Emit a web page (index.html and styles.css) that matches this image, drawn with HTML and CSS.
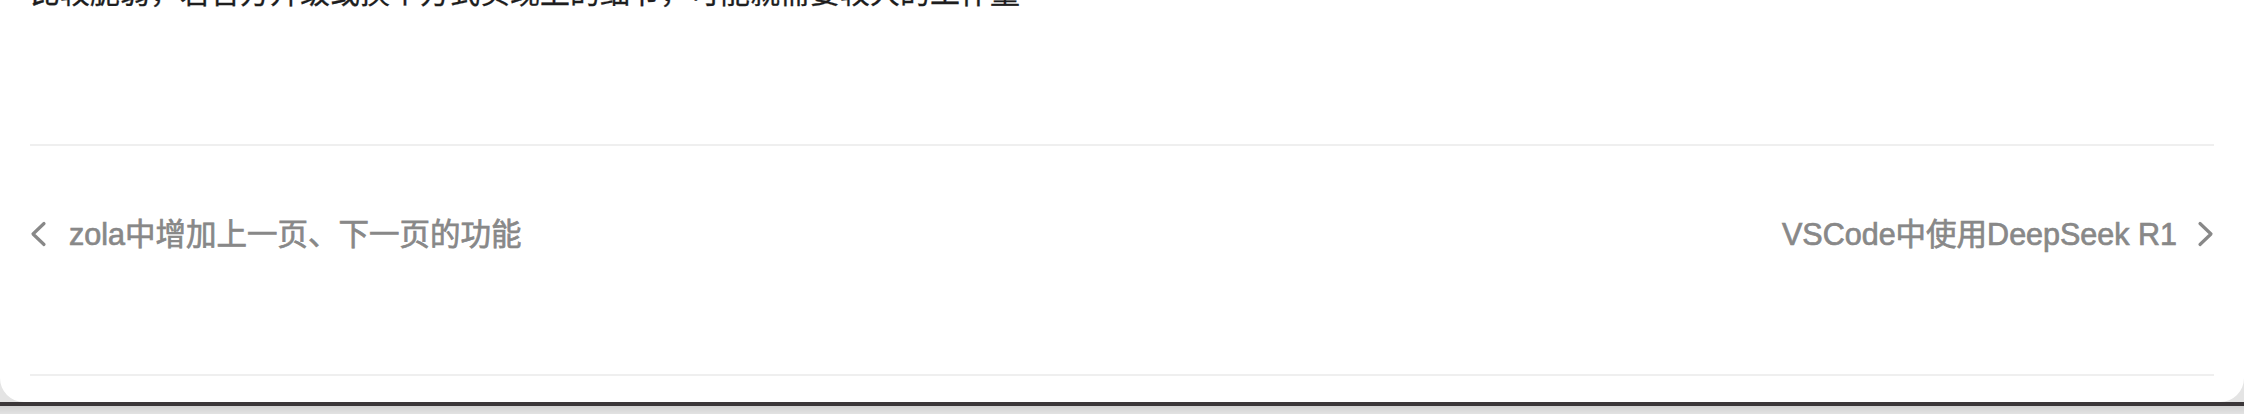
FILE: index.html
```html
<!DOCTYPE html>
<html lang="zh">
<head>
<meta charset="utf-8">
<title>文章导航</title>
<link rel="stylesheet" href="styles.css">
</head>
<body>
<div class="page">
  <article class="card">
    <p class="body-text">比较脆弱，若官方升级或换个方式实现上的细节，可能就需要较大的工作量</p>
    <hr class="rule">
    <nav class="post-nav">
      <a class="nav-link prev" href="#">
        <svg class="chev" width="17" height="26" viewBox="0 0 17 26"><path d="M14 2.5 L3 13 L14 23.5" fill="none" stroke="#888888" stroke-width="3.2" stroke-linecap="round" stroke-linejoin="round"/></svg>
        <span>zola中增加上一页、下一页的功能</span>
      </a>
      <a class="nav-link next" href="#">
        <span>VSCode中使用DeepSeek R1</span>
        <svg class="chev" width="17" height="26" viewBox="0 0 17 26"><path d="M3 2.5 L14 13 L3 23.5" fill="none" stroke="#888888" stroke-width="3.2" stroke-linecap="round" stroke-linejoin="round"/></svg>
      </a>
    </nav>
    <hr class="rule">
  </article>
  <div class="dock-bar"></div>
  <div class="dock-shade"></div>
</div>
</body>
</html>
```

FILE: styles.css
```css
* { box-sizing: border-box; }
html, body { margin: 0; padding: 0; }
body {
  background: #e4e4e4;
  font-family: "Liberation Sans", "Noto Sans CJK SC", sans-serif;
  overflow: hidden;
}
.page {
  width: 2244px;
  height: 414px;
  display: flex;
  flex-direction: column;
}
.card {
  background: #ffffff;
  height: 402px;
  border-radius: 0 0 24px 24px;
  padding: 0 30px;
  display: flex;
  flex-direction: column;
  overflow: hidden;
}
.body-text {
  margin: -31px 0 0 0;
  font-size: 30px;
  line-height: 48px;
  color: #1e1e1e;
  white-space: nowrap;
  -webkit-text-stroke: 0.3px #1e1e1e;
}
.rule {
  border: 0;
  border-top: 2px solid #efefef;
  margin: 127px 0 0 0;
  height: 0;
}
.post-nav {
  display: flex;
  justify-content: space-between;
  align-items: flex-start;
  padding-top: 70px;
  height: 228px;
}
.post-nav + .rule { margin-top: 0; }
.nav-link {
  display: flex;
  align-items: center;
  gap: 22px;
  color: #888888;
  text-decoration: none;
  font-size: 30.5px;
  font-weight: normal;
  line-height: 36px;
  -webkit-text-stroke: 0.7px #888888;
}
.next { gap: 20px; }
.chev { display: block; }
.dock-bar {
  height: 4px;
  background: #3b3739;
}
.dock-shade {
  flex: 1;
  background: linear-gradient(#d2d2d2, #e2e2e2);
}
```
